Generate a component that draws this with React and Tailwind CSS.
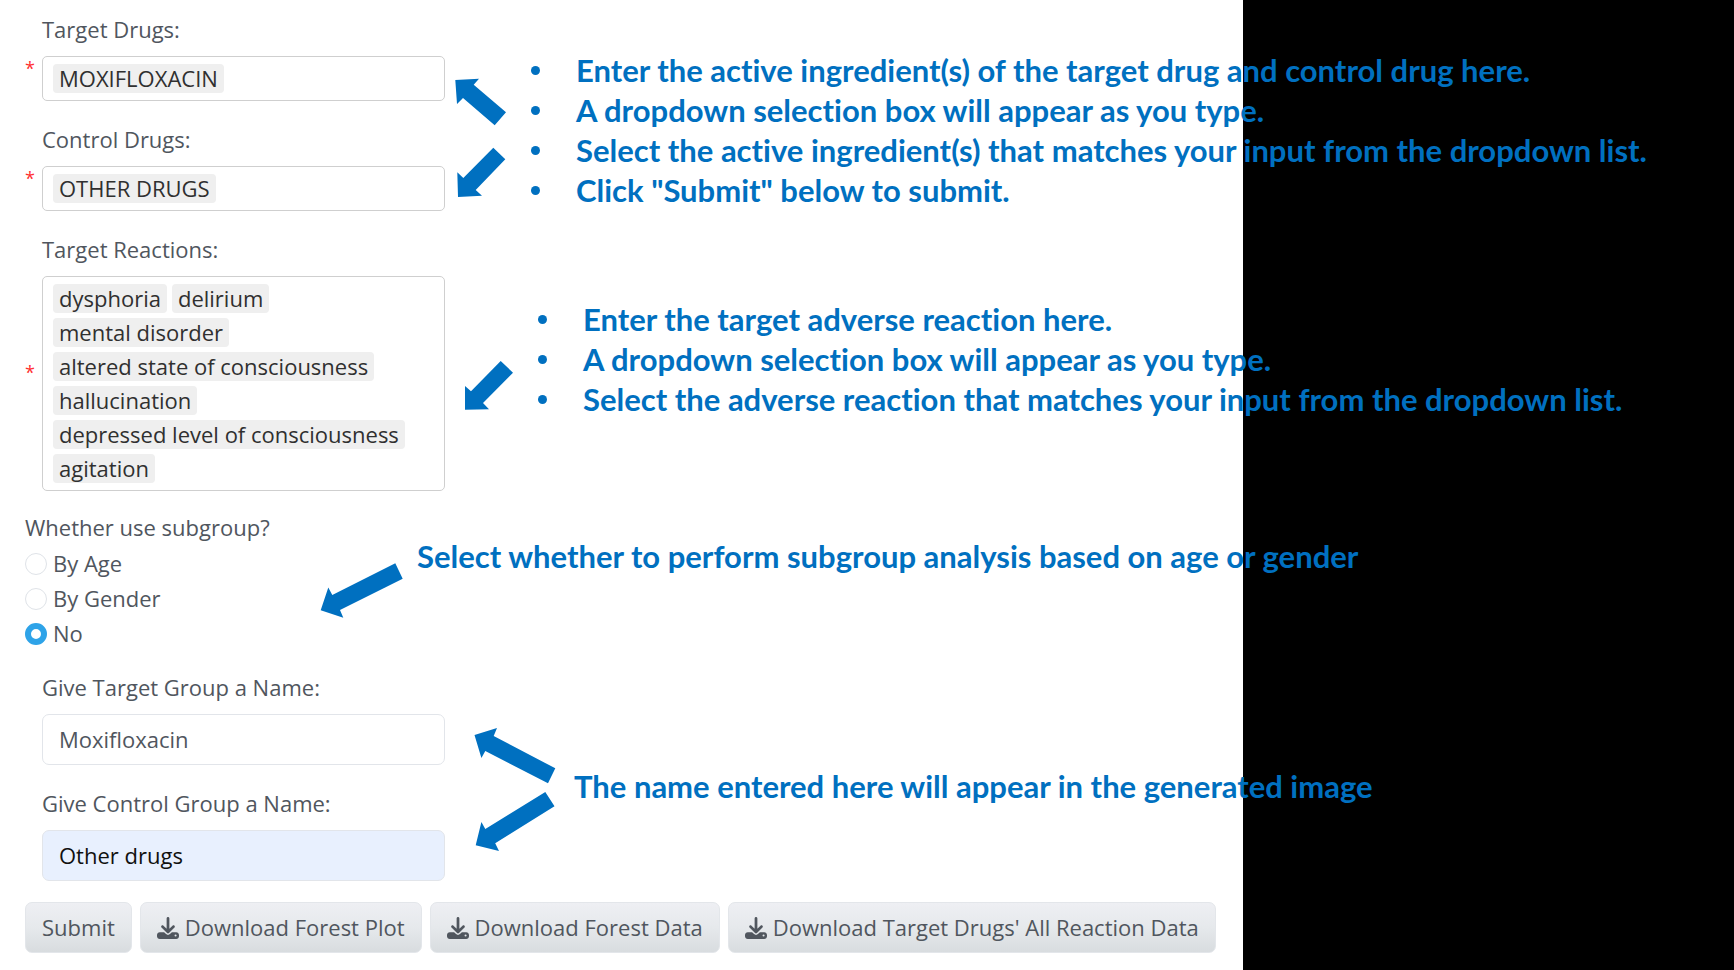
import { FaDownload } from "react-icons/fa6";

const reactions = [
  "dysphoria",
  "delirium",
  "mental disorder",
  "altered state of consciousness",
  "hallucination",
  "depressed level of consciousness",
  "agitation",
];

function TagField({ id, label, tags, starClass }) {
  return (
    <div className="flex flex-col gap-[10px]">
      <label htmlFor={id} className="ml-[17px] h-[34px] leading-[34px]">
        {label}
      </label>
      <div className="flex">
        <span className={`w-[17px] shrink-0 text-[18px] leading-[24px] text-[#ff3030] ${starClass}`}>*</span>
        <div className="flex flex-1 flex-wrap gap-[5px] rounded-[5px] border border-[#cfcfcf] px-[10px] py-[7px]">
          {tags.map((tag) => (
            <span
              key={tag}
              className="h-[29px] rounded-[4px] bg-[#efefef] px-[6px] leading-[28px] text-[#303030]"
            >
              {tag}
            </span>
          ))}
          <input id={id} type="text" className="h-[29px] w-[20px] min-w-0 flex-1 bg-transparent outline-none" />
        </div>
      </div>
    </div>
  );
}

function NameField({ id, label, value, inputClass }) {
  return (
    <div className="ml-[17px] flex flex-col gap-[10px]">
      <label htmlFor={id} className="h-[34px] leading-[34px]">
        {label}
      </label>
      <input
        id={id}
        type="text"
        defaultValue={value}
        className={`h-[51px] w-full rounded-[7px] border border-[#e2e5ea] px-[16px] pb-[2px] outline-none ${inputClass}`}
      />
    </div>
  );
}

function Choice({ label, checked }) {
  return (
    <label className="flex h-[35px] items-center gap-[6px]">
      <input
        type="radio"
        name="subgroup"
        defaultChecked={checked}
        className="size-[22px] appearance-none rounded-full border border-[#dfe3e8] bg-white checked:border-[6px] checked:border-[#2ea3e8]"
      />
      {label}
    </label>
  );
}

function ActionButton({ children, download }) {
  return (
    <button
      type="button"
      className="flex h-[51px] items-center gap-[6px] rounded-[7px] border border-[#e3e6ea] bg-linear-to-b from-[#eeeff3] via-[#e6e9ec] to-[#d8dcdf] px-[16px] whitespace-nowrap"
    >
      {download && <FaDownload className="size-[22px]" />}
      {children}
    </button>
  );
}

function Arrow({ className, viewBox, points }) {
  return (
    <svg className={`absolute ${className}`} viewBox={viewBox} fill="#0070c0" aria-hidden="true">
      <polygon points={points} />
    </svg>
  );
}

function Notes({ className, items }) {
  return (
    <ul className={`absolute ${className}`}>
      {items.map((item) => (
        <li key={item} className="flex items-center gap-[36px]">
          <span className="size-[9px] rounded-full bg-[#0070c0]" />
          {item}
        </li>
      ))}
    </ul>
  );
}

export default function App() {
  return (
    <div className="relative min-h-screen overflow-hidden bg-black font-['Open_Sans','Noto_Sans',sans-serif] text-[22px] text-[#50565e]">
      <form className="min-h-screen w-[71.7%] bg-white px-[25px] pt-[12px]" onSubmit={(e) => e.preventDefault()}>
        <div className="flex w-[420px] flex-col">
          <div className="flex flex-col gap-[21px]">
            <TagField id="target" label="Target Drugs:" tags={["MOXIFLOXACIN"]} starClass="self-start" />
            <TagField id="control" label="Control Drugs:" tags={["OTHER DRUGS"]} starClass="self-start" />
            <TagField id="reactions" label="Target Reactions:" tags={reactions} starClass="self-center pb-[24px]" />
          </div>

          <fieldset className="mt-[19px] flex flex-col">
            <legend className="h-[36px] leading-[34px]">Whether use subgroup?</legend>
            <Choice label="By Age" />
            <Choice label="By Gender" />
            <Choice label="No" checked />
          </fieldset>

          <div className="mt-[19px] flex flex-col gap-[21px]">
            <NameField
              id="target-name"
              label="Give Target Group a Name:"
              value="Moxifloxacin"
              inputClass="bg-white"
            />
            <NameField
              id="control-name"
              label="Give Control Group a Name:"
              value="Other drugs"
              inputClass="bg-[#e8f0fe] text-[#101010]"
            />
          </div>
        </div>

        <div className="mt-[21px] flex gap-[8px]">
          <ActionButton>Submit</ActionButton>
          <ActionButton download>Download Forest Plot</ActionButton>
          <ActionButton download>Download Forest Data</ActionButton>
          <ActionButton download>Download Target Drugs' All Reaction Data</ActionButton>
        </div>
      </form>

      <div className="font-['Lato','Open_Sans',sans-serif] text-[31px] leading-[40px] font-bold whitespace-nowrap text-[#0070c0] [font-variant-ligatures:none]">
        <Notes
          className="top-[50px] left-[531px]"
          items={[
            "Enter the active ingredient(s) of the target drug and control drug here.",
            "A dropdown selection box will appear as you type.",
            "Select the active ingredient(s) that matches your input from the dropdown list.",
            'Click "Submit" below to submit.',
          ]}
        />
        <Notes
          className="top-[299px] left-[538px]"
          items={[
            "Enter the target adverse reaction here.",
            "A dropdown selection box will appear as you type.",
            "Select the adverse reaction that matches your input from the dropdown list.",
          ]}
        />
        <p className="absolute top-[536px] left-[417px]">
          Select whether to perform subgroup analysis based on age or gender
        </p>
        <p className="absolute top-[766px] left-[574px]">The name entered here will appear in the generated image</p>
      </div>

      <Arrow
        className="top-[78px] left-[455px] h-[48px] w-[52px]"
        viewBox="455 78 52 48"
        points="455.3,80 479,78.7 473.7,84.7 506,112.3 494.7,125.3 463,98 457,104"
      />
      <Arrow
        className="top-[147px] left-[457px] h-[51px] w-[49px]"
        viewBox="457 147 49 51"
        points="458,197 482,195.7 475.7,190 505.3,159.3 493.3,147.7 463.3,178 457.3,172.3"
      />
      <Arrow
        className="top-[360px] left-[464px] h-[51px] w-[50px]"
        viewBox="464 360 50 51"
        points="465,409.7 489,409.3 483,403 513,372.7 500.7,361 471,391.3 465,386"
      />
      <Arrow
        className="top-[563px] left-[320px] h-[55px] w-[84px]"
        viewBox="320 563 84 55"
        points="320.7,610.3 343.3,617.7 340,610 402.7,578.7 395.3,563.3 332.3,595 328.3,587.5"
      />
      <Arrow
        className="top-[727px] left-[474px] h-[57px] w-[82px]"
        viewBox="474 727 82 57"
        points="474.5,735 497,728 493.7,736 555.3,768.3 548,783.3 485.3,751 481.4,758"
      />
      <Arrow
        className="top-[791px] left-[475px] h-[61px] w-[80px]"
        viewBox="475 791 80 61"
        points="475.7,845.3 499,851 495.2,843.3 554.5,806.3 545.3,792 485.3,829 481.4,822"
      />
    </div>
  );
}
